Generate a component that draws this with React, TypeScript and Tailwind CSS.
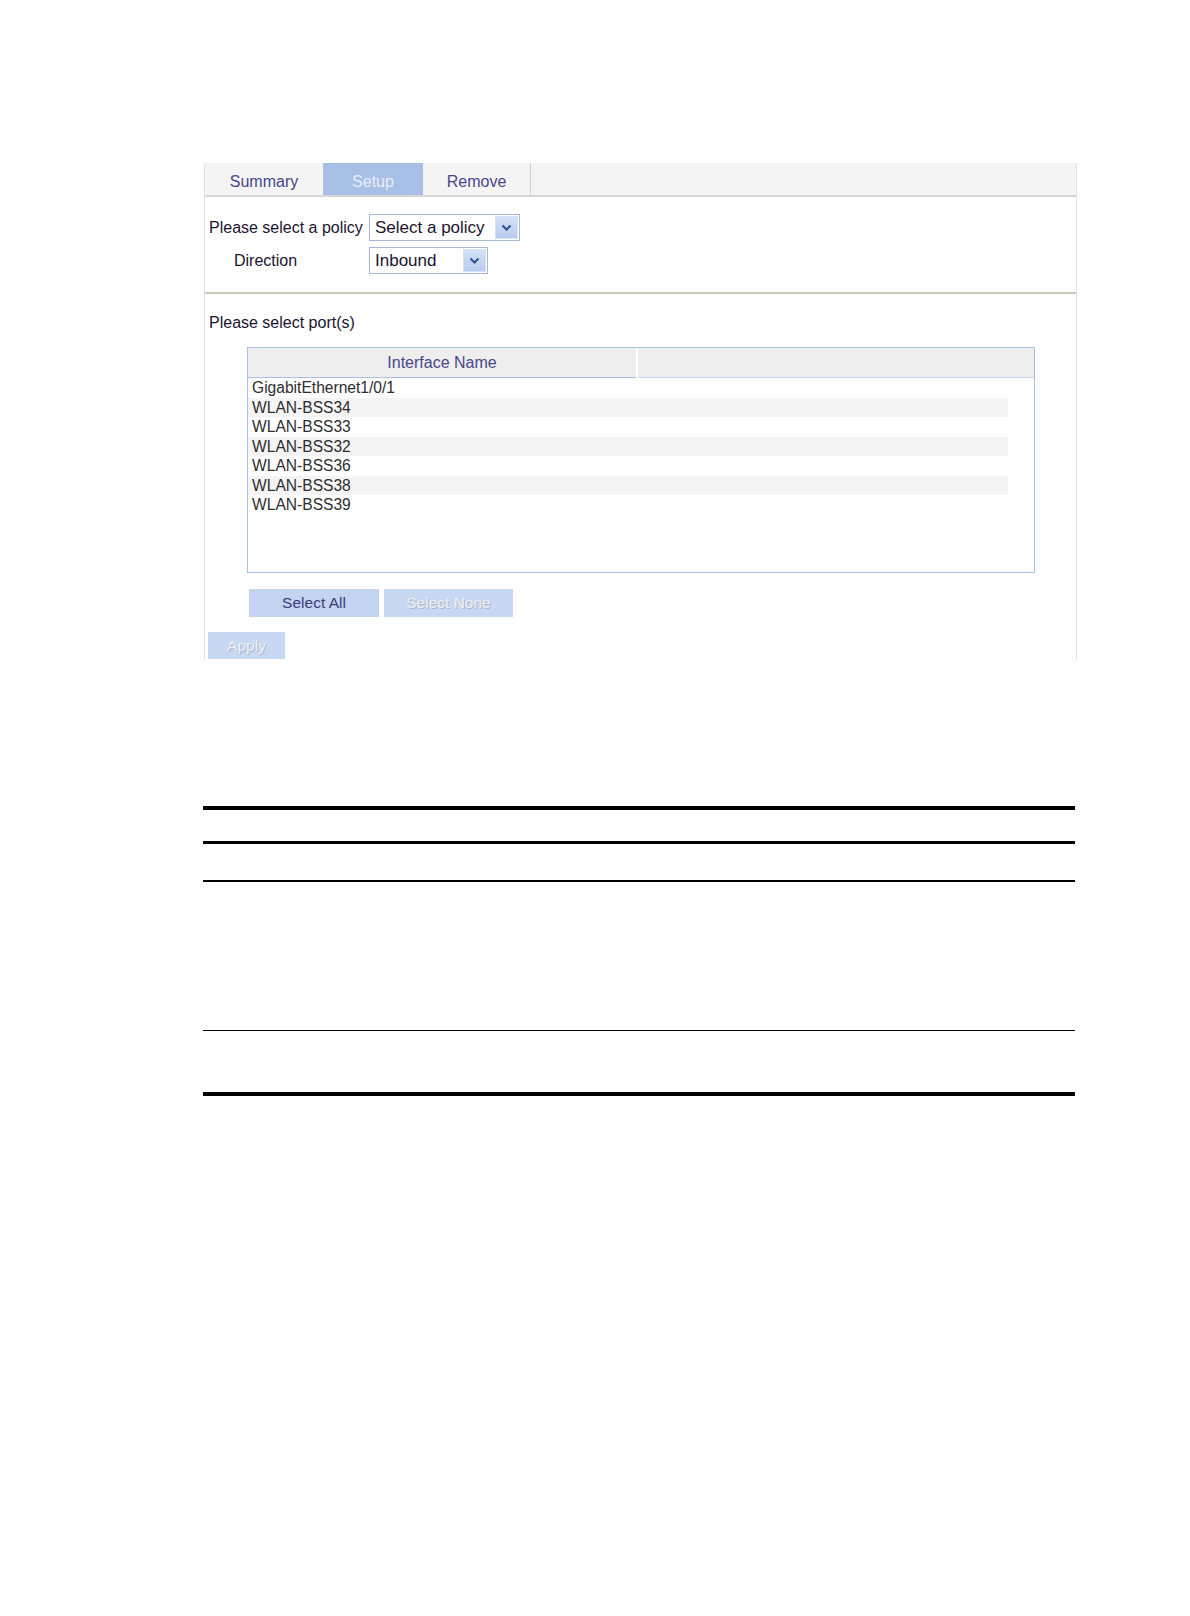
const ports = [
  'GigabitEthernet1/0/1',
  'WLAN-BSS34',
  'WLAN-BSS33',
  'WLAN-BSS32',
  'WLAN-BSS36',
  'WLAN-BSS38',
  'WLAN-BSS39',
];

function Chevron() {
  return (
    <svg width="11" height="8" viewBox="0 0 11 8">
      <path d="M1.5 1.5 L5.5 5.5 L9.5 1.5" fill="none" stroke="#2f4f96" strokeWidth="2" />
    </svg>
  );
}

function Dropdown({ label, width }: { label: string; width: string }) {
  return (
    <div className={`flex h-[27px] items-center justify-between border border-[#a6b8d2] bg-white pl-[5px] pr-[1px] ${width}`}>
      <span className="text-[17px] leading-none text-[#1c1330]">{label}</span>
      <span className="flex h-[23px] w-[23px] items-center justify-center border border-[#d6e2f6] bg-gradient-to-b from-[#d4e0f6] to-[#b9cbee]">
        <Chevron />
      </span>
    </div>
  );
}

export default function App() {
  return (
    <div className="min-h-[1616px] w-[1190px] bg-white pt-[163px] font-['Liberation_Sans',Arial,sans-serif]">
      <div className="ml-[204px] h-[497px] w-[873px] border-x border-[#e2e2e2]">
        {/* tabs */}
        <div className="flex h-[34px] border-b-2 border-[#d6d6d6] bg-[#f4f4f4] text-[16px]">
          <div className="flex w-[118px] items-center justify-center pt-[5px] text-[#47478a]">Summary</div>
          <div className="flex w-[100px] items-center justify-center bg-[#a9c0e6] pt-[5px] text-[#e8eefa]">Setup</div>
          <div className="flex w-[108px] items-center justify-center border-r border-[#cfcfcf] pt-[5px] text-[#47478a]">Remove</div>
        </div>

        <div className="grid grid-cols-[164px_auto] items-center gap-y-[6px] pt-[17px] text-[16px] text-[#1c1330]">
          <div className="pl-[4px]">Please select a policy</div>
          <Dropdown label="Select a policy" width="w-[151px]" />
          <div className="pl-[29px]">Direction</div>
          <Dropdown label="Inbound" width="w-[119px]" />
        </div>

        <div className="mt-[18px] h-[2px] bg-[#c7cab4]" />

        <div className="pl-[4px] pt-[20px] text-[16px] leading-[18px] text-[#1c1330]">Please select port(s)</div>

        <div className="ml-[42px] mt-[15px] h-[226px] w-[788px] border border-[#a9c0e8]">
          <div className="flex h-[30px] bg-[#eeeeee]">
            <div className="flex w-[388px] items-center justify-center border-b border-[#a9c0e8] text-[16px] text-[#47478a]">
              Interface Name
            </div>
            <div className="w-[2px] bg-white" />
            <div className="flex-1 border-b border-[#c7d5ee]" />
          </div>
          <div>
            {ports.map((p, i) => (
              <div
                key={p}
                className={`flex h-[19.5px] w-[760px] items-center pl-[4px] text-[15.6px] text-[#2e2e2e] ${i % 2 === 1 ? 'bg-[#f4f4f4]' : ''}`}
              >
                {p}
              </div>
            ))}
          </div>
        </div>

        <div className="ml-[44px] mt-[16px] flex gap-[5px]">
          <button className="h-[28px] w-[130px] bg-[#c3d3f0] text-[15.5px] text-[#3b3b78]">Select All</button>
          <button className="h-[28px] w-[129px] bg-[#c9d8f2] text-[15.5px] text-[#eef0f4] [text-shadow:1px_1px_0_#a9b5c9]">
            Select None
          </button>
        </div>

        <button className="ml-[3px] mt-[15px] h-[27px] w-[77px] bg-[#c9d8f2] text-[15.5px] text-[#eef0f4] [text-shadow:1px_1px_0_#a9b5c9]">
          Apply
        </button>
      </div>

      {/* table rules */}
      <div className="ml-[203px] mt-[146px] w-[872px]">
        <div className="h-[4px] bg-black" />
        <div className="h-[31px]" />
        <div className="h-[3px] bg-black" />
        <div className="h-[36px]" />
        <div className="h-[1.5px] bg-black" />
        <div className="h-[148px]" />
        <div className="h-[1.5px] bg-black" />
        <div className="h-[61px]" />
        <div className="h-[4px] bg-black" />
      </div>
    </div>
  );
}
